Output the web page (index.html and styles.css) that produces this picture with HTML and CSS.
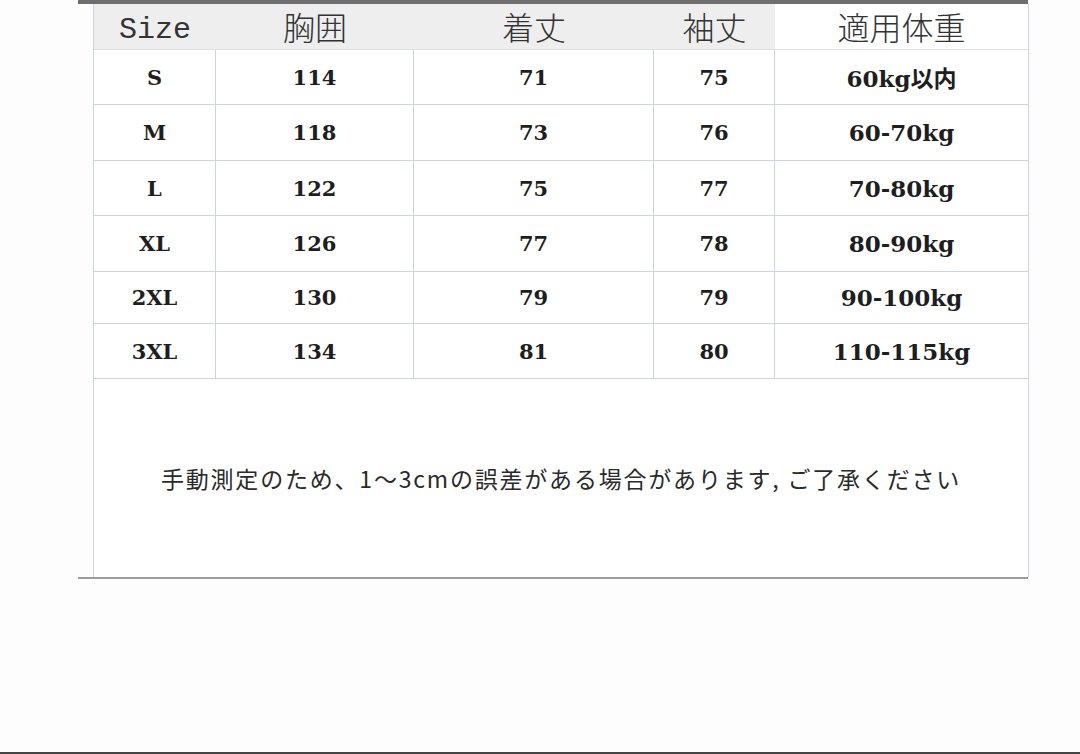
FILE: index.html
```html
<!DOCTYPE html>
<html lang="ja">
<head>
<meta charset="utf-8">
<title>サイズ表</title>
<link rel="stylesheet" href="styles.css">
</head>
<body>
<div class="page">
  <div class="frame">
    <div class="topbar"></div>
    <div class="chart">
      <div class="hcell mono">Size</div>
      <div class="hcell">胸囲</div>
      <div class="hcell">着丈</div>
      <div class="hcell">袖丈</div>
      <div class="hcell last">適用体重</div>

      <div class="cell r1">S</div><div class="cell r1">114</div><div class="cell r1">71</div><div class="cell r1">75</div><div class="cell r1 end">60kg以内</div>
      <div class="cell r2">M</div><div class="cell r2">118</div><div class="cell r2">73</div><div class="cell r2">76</div><div class="cell r2 end">60-70kg</div>
      <div class="cell r3">L</div><div class="cell r3">122</div><div class="cell r3">75</div><div class="cell r3">77</div><div class="cell r3 end">70-80kg</div>
      <div class="cell r4">XL</div><div class="cell r4">126</div><div class="cell r4">77</div><div class="cell r4">78</div><div class="cell r4 end">80-90kg</div>
      <div class="cell r5">2XL</div><div class="cell r5">130</div><div class="cell r5">79</div><div class="cell r5">79</div><div class="cell r5 end">90-100kg</div>
      <div class="cell r6">3XL</div><div class="cell r6">134</div><div class="cell r6">81</div><div class="cell r6">80</div><div class="cell r6 end">110-115kg</div>

      <div class="note">手動測定のため、1～3cmの誤差がある場合があります, ご了承ください</div>
    </div>
    <div class="baseline"></div>
  </div>
  <div class="spacer"></div>
  <div class="footbar"></div>
</div>
</body>
</html>
```

FILE: styles.css
```css
html, body {
  margin: 0;
  padding: 0;
  background: #fdfdfd;
}

.page {
  height: 754px;
  display: flex;
  flex-direction: column;
}

.frame {
  margin-left: 78px;
  width: 950px;
  display: flex;
  flex-direction: column;
}

.topbar {
  height: 4px;
  background: #6e6e6e;
}

.chart {
  margin-left: 15px;
  width: 935px;
  display: grid;
  grid-template-columns: 122px 198px 240px 121px 254px;
  grid-template-rows: 46px 55px 56px 55px 56px 52px 55px 198px;
  border-left: 1px solid #cfd3dd;
  box-sizing: border-box;
}

.hcell {
  background: #eeeeee;
  border-bottom: 1px solid #dde0e6;
  display: flex;
  align-items: center;
  justify-content: center;
  font-family: "Noto Sans CJK JP", sans-serif;
  font-weight: 300;
  font-size: 32px;
  color: #333333;
  padding-bottom: 2px;
  box-sizing: border-box;
}

.hcell.mono {
  font-family: "Liberation Mono", "DejaVu Sans Mono", monospace;
  font-weight: 400;
  font-size: 30px;
  color: #333;
  padding-bottom: 0;
  padding-top: 6px;
}

.hcell.last {
  background: #ffffff;
  border-right: 1px solid #cfd3dd;
}

.cell {
  border-right: 1px solid #cfd3dd;
  border-bottom: 1px solid #cfd3dd;
  background: #ffffff;
  display: flex;
  align-items: center;
  justify-content: center;
  font-family: "DejaVu Serif", "Noto Sans CJK JP", serif;
  font-weight: 700;
  font-size: 21px;
  color: #1e1e1e;
  box-sizing: border-box;
}

.cell.end {
  font-size: 23px;
}

.note {
  grid-column: 1 / 6;
  border-right: 1px solid #cfd3dd;
  background: #ffffff;
  display: flex;
  align-items: center;
  justify-content: center;
  font-family: "Noto Sans CJK JP", sans-serif;
  font-weight: 400;
  font-size: 23px;
  letter-spacing: 1.8px;
  color: #2a2a2a;
  box-sizing: border-box;
}

.baseline {
  height: 2px;
  background: #9c9c9c;
}

.spacer {
  flex: 1;
}

.footbar {
  height: 2px;
  background: #444444;
}
```
